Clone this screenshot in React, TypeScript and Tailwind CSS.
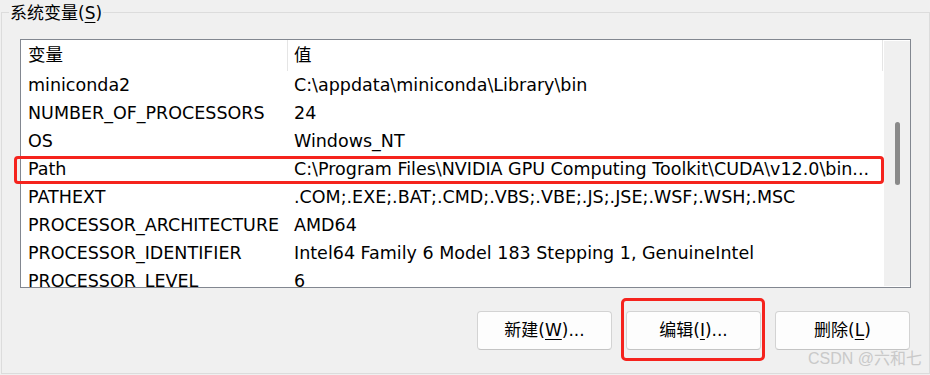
const rows: [string, string][] = [
  ["miniconda2", "C:\\appdata\\miniconda\\Library\\bin"],
  ["NUMBER_OF_PROCESSORS", "24"],
  ["OS", "Windows_NT"],
  ["Path", "C:\\Program Files\\NVIDIA GPU Computing Toolkit\\CUDA\\v12.0\\bin..."],
  ["PATHEXT", ".COM;.EXE;.BAT;.CMD;.VBS;.VBE;.JS;.JSE;.WSF;.WSH;.MSC"],
  ["PROCESSOR_ARCHITECTURE", "AMD64"],
  ["PROCESSOR_IDENTIFIER", "Intel64 Family 6 Model 183 Stepping 1, GenuineIntel"],
  ["PROCESSOR_LEVEL", "6"],
];

const Key = ({ k }: { k: string }) => (
  <span className="underline underline-offset-[3px] decoration-1">{k}</span>
);

const WinButton = ({ children }: { children: React.ReactNode }) => (
  <button className="w-[135px] h-[39px] rounded-[4px] border border-[#d3d3d3] border-b-[#c4c4c4] bg-[#fdfdfd] leading-[37px] text-center">
    {children}
  </button>
);

export default function App() {
  return (
    <div className="relative w-[930px] h-[375px] overflow-hidden bg-[#f0f0f0] text-[17px] text-black font-['DejaVu_Sans','Noto_Sans_CJK_SC',sans-serif]">
      <div className="ml-px mt-[12px] w-[929px] h-[362px] border border-[#dcdcdc] flex flex-col">
        <div className="-mt-[11px] ml-[7px] w-fit bg-[#f0f0f0] px-px leading-[22px]">
          系统变量(<Key k="S" />)
        </div>

        <div className="mt-[15px] ml-[18px] w-[891px] h-[249px] border border-[#828790] bg-white flex text-[17.5px]">
          <div className="w-[863px] overflow-hidden">
            <div className="flex h-[31px] leading-[31px]">
              <div className="w-[267px] pl-[7px] border-r border-[#e5e5e5]">变量</div>
              <div className="w-[595px] pl-[6px] border-r border-[#e5e5e5]">值</div>
            </div>
            {rows.map(([name, value]) => (
              <div key={name} className="flex h-[28px] leading-[28px] whitespace-nowrap">
                <div className="w-[267px] shrink-0 pl-[7px]">{name}</div>
                <div className="pl-[6px]">{value}</div>
              </div>
            ))}
          </div>
          <div className="w-[26px] my-px bg-[#f0f0f0] flex justify-center">
            <div className="mt-[81px] h-[63px] w-[5px] rounded-full bg-[#8a8a8a]" />
          </div>
        </div>

        <div className="mt-[23px] flex justify-end gap-[14px] pr-[19px]">
          <WinButton>
            新建(<Key k="W" />)...
          </WinButton>
          <WinButton>
            编辑(<Key k="I" />)...
          </WinButton>
          <WinButton>
            删除(<Key k="L" />)
          </WinButton>
        </div>
      </div>

      {/* annotation boxes */}
      <div className="absolute left-[14px] top-[156px] w-[870px] h-[28px] border-[3px] border-[#f5231d] rounded-[4px]" />
      <div className="absolute left-[621px] top-[298px] w-[144px] h-[63px] border-[3px] border-[#f5231d] rounded-[5px]" />

      <div className="absolute left-[808px] top-[348px] leading-[22px] text-[16px] text-[#c9c9c9] font-['Liberation_Sans','Noto_Sans_CJK_SC',sans-serif]">
        CSDN @六和七
      </div>
    </div>
  );
}
